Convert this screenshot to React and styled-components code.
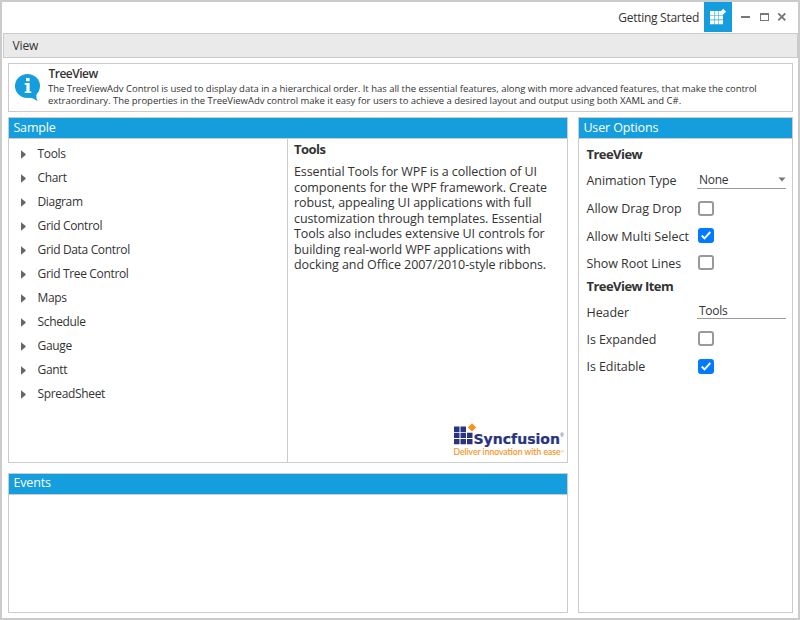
import React, { useState } from "react";
import styled, { createGlobalStyle } from "styled-components";

const Global = createGlobalStyle`
  * { box-sizing: border-box; }
  body { margin: 0; background: #fff; font-family: "Open Sans", "Noto Sans", sans-serif; color: #333; }
`;

const line = "#cbcbcb";
const blue = "#149edd";

const Window = styled.div`
  width: 800px;
  height: 620px;
  border: 2px solid ${line};
  display: flex;
  flex-direction: column;
  background: #fff;
  overflow: hidden;
  white-space: nowrap;
`;

const TitleBar = styled.header`
  height: 30px;
  flex: none;
  display: flex;
  justify-content: flex-end;
`;

const WindowTitle = styled.span`
  font-size: 12px;
  line-height: 31px;
  letter-spacing: -0.27px;
  margin-right: 5px;
`;

const AppBadge = styled.div`
  width: 28px;
  height: 30px;
  background: ${blue};
`;

const WindowButtons = styled.div`
  width: 66px;
`;

const MenuBar = styled.nav`
  height: 25px;
  flex: none;
  margin: 1px 0 0 1px;
  border: 1px solid ${line};
  background: #eaeaea;
  padding-left: 8.6px;
  font-size: 12px;
  line-height: 24px;
  letter-spacing: -0.2px;
`;

const Banner = styled.section`
  height: 49px;
  flex: none;
  margin: 5px 5px 0 6px;
  border: 1px solid ${line};
  display: flex;
`;

const BannerIcon = styled.div`
  width: 39px;
  flex: none;
`;

const BannerTitle = styled.h1`
  margin: 2px 0 0;
  padding-left: 0.5px;
  height: 17px;
  font-size: 12px;
  line-height: 16px;
  font-weight: 600;
  letter-spacing: -0.5px;
`;

const BannerText = styled.p`
  margin: 0;
  font-size: 9.5px;
  line-height: 12px;
  letter-spacing: -0.025px;
`;

const Workspace = styled.main`
  flex: 1;
  display: grid;
  grid-template-columns: 560px 215px;
  grid-template-rows: 346px 140px;
  gap: 10px;
  margin: 5px 0 0 6px;
`;

const Panel = styled.section`
  grid-row: ${(p) => (p.$tall ? "1 / 3" : "auto")};
  grid-column: ${(p) => (p.$tall ? 2 : 1)};
  border: 1px solid ${line};
  display: flex;
  flex-direction: column;
`;

const PanelTitle = styled.h2`
  height: 21px;
  flex: none;
  margin: 0;
  padding-left: 4.4px;
  background: ${blue};
  border-bottom: 1px solid ${line};
  color: #fff;
  font-size: 12.5px;
  font-weight: 400;
  line-height: ${(p) => (p.$raised ? 18 : 20)}px;
  letter-spacing: -0.14px;
`;

const SampleBody = styled.div`
  flex: 1;
  display: flex;
`;

const Tree = styled.ul`
  width: 279px;
  margin: 0;
  padding: 3px 0 0 12px;
  border-right: 1px solid ${line};
  list-style: none;
`;

const TreeRow = styled.li`
  height: 24px;
  display: flex;
  align-items: center;
  font-size: 12px;
  line-height: 16px;
  letter-spacing: -0.34px;
  svg { margin-right: 11.5px; }
  span { margin-top: -1px; }
`;

const Detail = styled.article`
  flex: 1;
  padding: 3px 3px 4px 6px;
  display: flex;
  flex-direction: column;
`;

const Heading = styled.h3`
  margin: 0;
  height: ${(p) => p.$h}px;
  font-size: 13px;
  font-weight: 700;
  line-height: ${(p) => p.$lh}px;
  letter-spacing: -0.55px;
`;

const Description = styled.p`
  margin: 6px 0 0;
  font-size: 12.5px;
  line-height: 15.5px;
  letter-spacing: -0.08px;
`;

const LogoSlot = styled.div`
  margin-top: auto;
  align-self: flex-end;
  height: 36px;
`;

const Options = styled.div`
  padding: 5px 6px 0 7.5px;
`;

const OptionRow = styled.div`
  height: ${(p) => p.$h}px;
  display: grid;
  grid-template-columns: 110.5px 89px;
  align-items: center;
  font-size: 12.5px;
  letter-spacing: ${(p) => p.$track ?? -0.08}px;
`;

const Field = styled.div`
  height: ${(p) => p.$h}px;
  margin-top: ${(p) => p.$shift}px;
  border-bottom: 1px solid #9b9b9b;
  padding: 0 0 0 2px;
  display: flex;
  align-items: center;
  justify-content: space-between;
  font-size: 12px;
  line-height: 16px;
  letter-spacing: -0.25px;
  span { margin-top: 2px; }
`;

const Check = styled.button`
  width: 16px;
  height: 15px;
  margin: ${(p) => (p.$up ? "-2px" : "0")} 0 0 1px;
  padding: 0;
  border: 2px solid ${(p) => (p.$on ? "#007bff" : "#999")};
  border-radius: 3px;
  background: ${(p) => (p.$on ? "#007bff" : "#fff")};
  display: flex;
  align-items: center;
  justify-content: center;
  svg { flex: none; }
`;

function CheckBox({ initial = false, label, up }) {
  const [on, setOn] = useState(initial);
  return (
    <Check $on={on} $up={up} aria-label={label} onClick={() => setOn(!on)}>
      {on && (
        <svg width="12" height="11" viewBox="0 0 12 11">
          <path d="M1.7 5.5 4.5 8.3 10.3 2" fill="none" stroke="#fff" strokeWidth="1.9" />
        </svg>
      )}
    </Check>
  );
}

function CheckRow({ label, h, initial, up, track }) {
  return (
    <OptionRow $h={h} $track={track}>
      <span>{label}</span>
      <CheckBox label={label} initial={initial} up={up} />
    </OptionRow>
  );
}

const samples = ["Tools", "Chart", "Diagram", "Grid Control", "Grid Data Control", "Grid Tree Control", "Maps", "Schedule", "Gauge", "Gantt", "SpreadSheet"];

function GridGlyph() {
  return (
    <svg width="28" height="30" viewBox="0 0 28 30">
      <path fill="#fff" d="M6 9h4v4H6zM10.5 9h4v4h-4zM15 9h1.6l2.4 2.6V13h-4zM6 13.6h4v4H6zM10.5 13.6h4v4h-4zM15 13.6h4v4h-4zM6 18.2h4v4H6zM10.5 18.2h4v4h-4zM15 18.2h4v4h-4zM19.2 6.8l2.9 2.9-2.9 2.9-2.9-2.9z" />
    </svg>
  );
}

function WindowGlyphs() {
  return (
    <svg width="66" height="30" viewBox="0 0 66 30">
      <path d="M9 15h9" stroke="#777" strokeWidth="2" />
      <path d="M28 11h9v8h-9zM29 13v5h7v-5z" fill="#777" fillRule="evenodd" />
      <path d="M46.3 11.3l7 7M53.3 11.3l-7 7" stroke="#777" strokeWidth="1.9" />
    </svg>
  );
}

function InfoGlyph() {
  return (
    <svg width="39" height="47" viewBox="0 0 39 47">
      <ellipse cx="18.5" cy="22" rx="12.5" ry="12" fill={blue} />
      <path d="M20 33.7Q25 34 28.5 37.3Q27 34 27.3 29z" fill={blue} />
      <path fill="#fff" d="M17 14h3.6v3.2H17zM15.7 19h4.9v8.4h1.7v1.7h-6.6v-1.7h1.7v-6.7h-1.7z" />
    </svg>
  );
}

function SyncfusionLogo() {
  return (
    <svg width="112" height="36" viewBox="0 0 112 36" overflow="visible">
      <path fill="#28347f" d="M2 4.500h5.500v5.400H2zM8.500 4.500H14v5.400H8.500zM2 10.700h5.500v5.400H2zM8.500 10.700H14v5.400H8.500zM15 10.700h5.500v5.400H15zM2 16.900h5.500v5.400H2zM8.500 16.900H14v5.400H8.500zM15 16.900h5.500v5.400H15z" />
      <path fill="#f7941d" d="M20 1.200l4.200 4.200-4.200 4.200-4.200-4.200z" />
      <text x="21.500" y="22" fill="#28347f" stroke="#28347f" strokeWidth=".2" fontFamily="DejaVu Sans" fontWeight="700" fontSize="13.500" textLength="86.500" lengthAdjust="spacingAndGlyphs">Syncfusion</text>
      <text x="108.200" y="15" fill="#28347f" fontFamily="Liberation Sans" fontSize="4.500">®</text>
      <text x="1.500" y="33" fill="#f7941d" stroke="#f7941d" strokeWidth=".15" fontFamily="Lato" fontSize="8.800" textLength="107" lengthAdjust="spacingAndGlyphs">Deliver innovation with ease</text>
      <text x="109" y="30.500" fill="#f7941d" fontFamily="Liberation Sans" fontSize="4">®</text>
    </svg>
  );
}

export default function App() {
  return (
    <>
      <Global />
      <Window>
        <TitleBar>
          <WindowTitle>Getting Started</WindowTitle>
          <AppBadge><GridGlyph /></AppBadge>
          <WindowButtons><WindowGlyphs /></WindowButtons>
        </TitleBar>
        <MenuBar>View</MenuBar>
        <Banner>
          <BannerIcon><InfoGlyph /></BannerIcon>
          <div>
            <BannerTitle>TreeView</BannerTitle>
            <BannerText>
              The TreeViewAdv Control is used to display data in a hierarchical order. It has all the essential features, along with more advanced features, that make the control<br />
              extraordinary. The properties in the TreeViewAdv control make it easy for users to achieve a desired layout and output using both XAML and C#.
            </BannerText>
          </div>
        </Banner>
        <Workspace>
          <Panel>
            <PanelTitle>Sample</PanelTitle>
            <SampleBody>
              <Tree>
                {samples.map((name) => (
                  <TreeRow key={name}>
                    <svg width="5" height="9" viewBox="0 0 5 9"><path d="M0 .2 4.600 4v1L0 8.800z" fill="#666" /></svg>
                    <span>{name}</span>
                  </TreeRow>
                ))}
              </Tree>
              <Detail>
                <Heading $h={16} $lh={15}>Tools</Heading>
                <Description>
                  Essential Tools for WPF is a collection of UI<br />
                  components for the WPF framework. Create<br />
                  robust, appealing UI applications with full<br />
                  customization through templates. Essential<br />
                  Tools also includes extensive UI controls for<br />
                  building real-world WPF applications with<br />
                  docking and Office 2007/2010-style ribbons.
                </Description>
                <LogoSlot><SyncfusionLogo /></LogoSlot>
              </Detail>
            </SampleBody>
          </Panel>
          <Panel $tall>
            <PanelTitle>User Options</PanelTitle>
            <Options>
              <Heading $h={22} $lh={21}>TreeView</Heading>
              <OptionRow $h={29}>
                <span>Animation Type</span>
                <Field $h={18} $shift={-2}>
                  <span>None</span>
                  <svg width="8" height="5" viewBox="0 0 8 5"><path d="M.5.500h7L4 4.500z" fill="#777" /></svg>
                </Field>
              </OptionRow>
              <CheckRow label="Allow Drag Drop" h={27} track={0} />
              <CheckRow label="Allow Multi Select" h={28} initial up track={0.02} />
              <CheckRow label="Show Root Lines" h={26} up />
              <Heading $h={22} $lh={20}>TreeView Item</Heading>
              <OptionRow $h={28}>
                <span>Header</span>
                <Field $h={17} $shift={-4}><span>Tools</span></Field>
              </OptionRow>
              <CheckRow label="Is Expanded" h={26} up />
              <CheckRow label="Is Editable" h={29} initial />
            </Options>
          </Panel>
          <Panel>
            <PanelTitle $raised>Events</PanelTitle>
          </Panel>
        </Workspace>
      </Window>
    </>
  );
}
